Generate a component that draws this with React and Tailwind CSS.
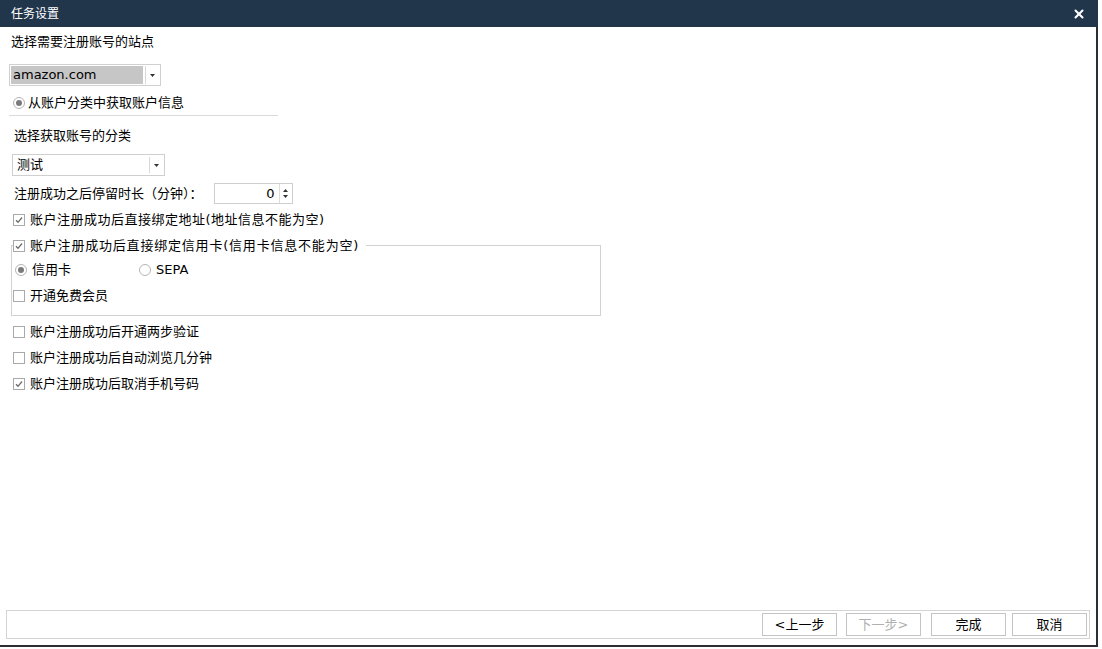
import { X } from "lucide-react";

const font = { fontFamily: '"DejaVu Sans", "Noto Sans CJK SC", sans-serif' };

function Check({ checked }) {
  return (
    <span className="flex h-[12px] w-[12px] shrink-0 items-center justify-center border border-[#a9a9a9] bg-white">
      {checked && (
        <svg width="8" height="8" viewBox="0 0 8 8">
          <path d="M1 4.2 L3 6.3 L7 1.5" fill="none" stroke="#6b6b6b" strokeWidth="1.3" />
        </svg>
      )}
    </span>
  );
}

function Radio({ checked }) {
  return (
    <span className="flex h-[12px] w-[12px] shrink-0 items-center justify-center rounded-full border border-[#b5b5b5] bg-white">
      {checked && <span className="h-[6px] w-[6px] rounded-full bg-[#7a7a7a]" />}
    </span>
  );
}

function DropBtn() {
  return (
    <span className="flex h-full w-[14px] items-center justify-center border-l border-[#d8d8d8] bg-white">
      <svg width="5" height="3" viewBox="0 0 5 3">
        <path d="M0 0 H5 L2.5 3 Z" fill="#333" />
      </svg>
    </span>
  );
}

function Row({ checked, children, className = "" }) {
  return (
    <div className={`flex items-center gap-[5px] ${className}`}>
      <Check checked={checked} />
      <span>{children}</span>
    </div>
  );
}

function Btn({ children, disabled }) {
  return (
    <button
      className={`h-[23px] w-[75px] border border-[#c4c4c4] bg-white text-[13px] ${disabled ? "text-[#b0b0b0]" : "text-black"}`}
    >
      {children}
    </button>
  );
}

export default function App() {
  return (
    <div className="h-[649px] w-[1102px] bg-white text-[13px] text-black" style={font}>
      <div className="flex h-[647px] w-[1098px] flex-col">
        <div className="flex h-[27px] shrink-0 items-center justify-between bg-[#22364b] pl-[11px] pr-[12px]">
          <span className="text-[12px] text-white">任务设置</span>
          <X size={14} strokeWidth={3.5} className="text-white" />
        </div>
        <div className="flex flex-1 flex-col border-b-2 border-r-2 border-[#2a2f36]">
          <div className="flex-1 pl-[11px] pt-[6px]">
            <div className="leading-[18px]">选择需要注册账号的站点</div>
            <div className="mt-[13px] ml-[-2px] flex h-[22px] w-[152px] items-center border border-[#d0d0d0] p-[1px]">
              <span className="flex h-full flex-1 items-center bg-[#c6c6c6] pl-[2px] text-[13px]">amazon.com</span>
              <span className="ml-[2px] h-full">
                <DropBtn />
              </span>
            </div>
            <div className="mt-[8px] ml-[2px] flex items-center gap-[3px] leading-[18px]">
              <Radio checked />
              <span>从账户分类中获取账户信息</span>
            </div>
            <div className="mt-[3px] ml-[-2px] h-[2px] w-[269px] border-t border-[#dadada]" />
            <div className="mt-[10px] ml-[3px] leading-[18px]">选择获取账号的分类</div>
            <div className="mt-[9px] ml-[1px] flex h-[22px] w-[153px] items-center border border-[#cfcfcf]">
              <span className="flex-1 pl-[4px]">测试</span>
              <span className="h-full py-[2px] pr-[1px]">
                <DropBtn />
              </span>
            </div>
            <div className="mt-[7px] ml-[3px] flex items-center">
              <span>注册成功之后停留时长（分钟）：</span>
              <div className="ml-[11px] flex h-[21px] w-[79px] items-center border border-[#cfcfcf]">
                <span className="flex-1 pr-[4px] text-right">0</span>
                <span className="flex h-full w-[13px] flex-col items-center justify-center gap-[3px] border-l border-[#dcdcdc]">
                  <svg width="5" height="3" viewBox="0 0 5 3"><path d="M0 3 H5 L2.5 0 Z" fill="#333" /></svg>
                  <svg width="5" height="3" viewBox="0 0 5 3"><path d="M0 0 H5 L2.5 3 Z" fill="#333" /></svg>
                </span>
              </div>
            </div>
            <Row checked className="mt-[7px] ml-[2px] leading-[18px] tracking-[0.5px]">账户注册成功后直接绑定地址(地址信息不能为空)</Row>
            <div className="relative mt-[16px] h-[71px] w-[590px] border border-[#d2d2d2]">
              <div className="absolute left-[1px] top-[-9px] flex items-center gap-[5px] bg-white pr-[7px] leading-[18px] tracking-[0.8px]">
                <Check checked />
                <span>账户注册成功后直接绑定信用卡(信用卡信息不能为空)</span>
              </div>
              <div className="mt-[15px] ml-[3px] flex items-center leading-[18px]">
                <Radio checked />
                <span className="ml-[5px] w-[107px]">信用卡</span>
                <Radio />
                <span className="ml-[5px]">SEPA</span>
              </div>
              <Row className="mt-[8px] ml-[1px] leading-[18px]">开通免费会员</Row>
            </div>
            <Row className="mt-[7px] ml-[2px] leading-[18px]">账户注册成功后开通两步验证</Row>
            <Row className="mt-[8px] ml-[2px] leading-[18px]">账户注册成功后自动浏览几分钟</Row>
            <Row checked className="mt-[8px] ml-[2px] leading-[18px]">账户注册成功后取消手机号码</Row>
          </div>
          <div className="mb-[6px] ml-[6px] mr-[6px] flex h-[29px] items-center justify-end gap-[9px] border border-[#d4d4d4] pr-[2px]">
            <Btn>&lt;上一步</Btn>
            <Btn disabled>下一步&gt;</Btn>
            <span className="ml-[1px]"><Btn>完成</Btn></span>
            <span className="ml-[-3px]"><Btn>取消</Btn></span>
          </div>
        </div>
      </div>
    </div>
  );
}
